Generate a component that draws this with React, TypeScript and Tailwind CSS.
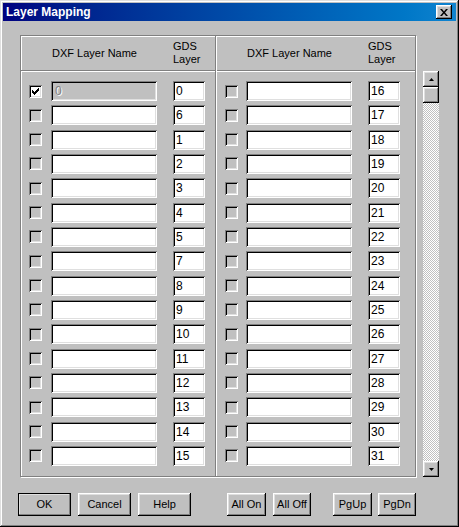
import React from 'react';

const raised =
  'bg-[#c0c0c0] shadow-[inset_-1px_-1px_0_#000,inset_1px_1px_0_#fff,inset_-2px_-2px_0_#808080,inset_2px_2px_0_#dfdfdf]';
const sunken =
  'shadow-[inset_1px_1px_0_#808080,inset_-1px_-1px_0_#fff,inset_2px_2px_0_#000,inset_-2px_-2px_0_#dfdfdf]';

const leftGds = [0, 6, 1, 2, 3, 4, 5, 7, 8, 9, 10, 11, 12, 13, 14, 15];
const rightGds = Array.from({ length: 16 }, (_, i) => i + 16);

function CheckBox({ checked }: { checked?: boolean }) {
  return (
    <div
      className={`w-[13px] h-[13px] shrink-0 flex items-center justify-center ${sunken} ${
        checked ? 'bg-white' : 'bg-[#c0c0c0]'
      }`}
    >
      {checked && (
        <svg width="7" height="7" viewBox="0 0 7 7">
          <path d="M0 2h1v1h1v1h1v-1h1v-1h1v-1h1v-1h1v3h-1v1h-1v1h-1v1h-1v1h-1v-1h-1v-1h-1z" fill="#000" />
        </svg>
      )}
    </div>
  );
}

function Row({ gds, first, checked, gap }: { gds: number; first?: boolean; checked?: boolean; gap: string }) {
  return (
    <div className="flex items-center h-[20px] pl-[8px]">
      <CheckBox checked={checked} />
      <div
        className={`${gap} w-[106px] h-[20px] flex items-center pl-[4px] text-[12px] ${sunken} ${
          first ? 'bg-[#c0c0c0] text-[#808080] [text-shadow:1px_1px_0_#fff]' : 'bg-white'
        }`}
      >
        {first ? '0' : ''}
      </div>
      <div className={`ml-[16px] w-[32px] h-[20px] flex items-center pl-[3px] text-[12px] bg-white text-black ${sunken}`}>
        {gds}
      </div>
    </div>
  );
}

function Column({ gds, left }: { gds: number[]; left?: boolean }) {
  return (
    <div
      className={`flex flex-col ${
        left ? 'w-[195px] border-r border-[#808080]' : 'w-[199px] border-l border-white'
      }`}
    >
      <div className="h-[35px] border-b border-[#808080] flex items-center">
        <div className={left ? 'pl-[31px] w-[152px]' : 'pl-[30px] w-[151px]'}>DXF Layer Name</div>
        <div className="leading-[13px]">
          GDS
          <br />
          Layer
        </div>
      </div>
      <div className="flex-1 border-t border-white pt-[9px] flex flex-col gap-[4.33px]">
        {gds.map((g, i) => (
          <Row key={g} gds={g} first={left && i === 0} checked={left && i === 0} gap={left ? 'ml-[9px]' : 'ml-[8px]'} />
        ))}
      </div>
    </div>
  );
}

function Arrow({ up }: { up?: boolean }) {
  return (
    <svg width="5" height="3" viewBox="0 0 5 3">
      <path d={up ? 'M2.5 0L5 3H0z' : 'M0 0h5L2.5 3z'} fill="#000" />
    </svg>
  );
}

function Button({ label, w, def }: { label: string; w: string; def?: boolean }) {
  return (
    <div
      className={`${w} h-[23px] flex items-center justify-center ${raised} ${
        def ? 'outline outline-1 outline-black -outline-offset-1' : ''
      }`}
    >
      {label}
    </div>
  );
}

export default function App() {
  return (
    <div
      className={`w-[459px] h-[527px] p-[3px] flex flex-col bg-[#c0c0c0] text-[11px] text-black font-['Liberation_Sans',Arial,sans-serif] shadow-[inset_-1px_-1px_0_#000,inset_1px_1px_0_#dfdfdf,inset_-2px_-2px_0_#808080,inset_2px_2px_0_#fff]`}
    >
      <div className="h-[18px] flex items-center justify-between pl-[3px] pr-[4px] bg-linear-to-r from-[#000080] to-[#1084d0]">
        <span className="text-white font-bold text-[12px]">Layer Mapping</span>
        <div className={`w-[16px] h-[14px] flex items-center justify-center ${raised}`}>
          <svg width="8" height="7" viewBox="0 0 8 7">
            <path d="M0 0h2l2 2.5L6 0h2L5 3.5 8 7H6L4 4.5 2 7H0l3-3.5z" fill="#000" />
          </svg>
        </div>
      </div>

      <div className="pl-[17px] pt-[14px] flex items-start">
        <div className="w-[396px] h-[442px] flex border border-[#808080] shadow-[inset_1px_1px_0_#fff,1px_1px_0_#fff]">
          <Column gds={leftGds} left />
          <Column gds={rightGds} />
        </div>
        <div className="ml-[7px] mt-[36px] w-[16px] h-[406px] flex flex-col">
          <div className={`h-[16px] flex items-center justify-center ${raised}`}>
            <Arrow up />
          </div>
          <div className={`h-[16px] ${raised}`} />
          <div className="flex-1 bg-[image:repeating-conic-gradient(#fff_0_25%,#c0c0c0_0_50%)] bg-[length:2px_2px]" />
          <div className={`h-[16px] flex items-center justify-center ${raised}`}>
            <Arrow />
          </div>
        </div>
      </div>

      <div className="mt-[16px] pl-[15px] flex items-center">
        <div className="flex gap-[7px]">
          <Button label="OK" w="w-[53px]" def />
          <Button label="Cancel" w="w-[53px]" />
          <Button label="Help" w="w-[53px]" />
        </div>
        <div className="ml-[36px] flex gap-[7px]">
          <Button label="All On" w="w-[39px]" />
          <Button label="All Off" w="w-[38px]" />
        </div>
        <div className="ml-[22px] flex gap-[6px]">
          <Button label="PgUp" w="w-[39px]" />
          <Button label="PgDn" w="w-[38px]" />
        </div>
      </div>
    </div>
  );
}
